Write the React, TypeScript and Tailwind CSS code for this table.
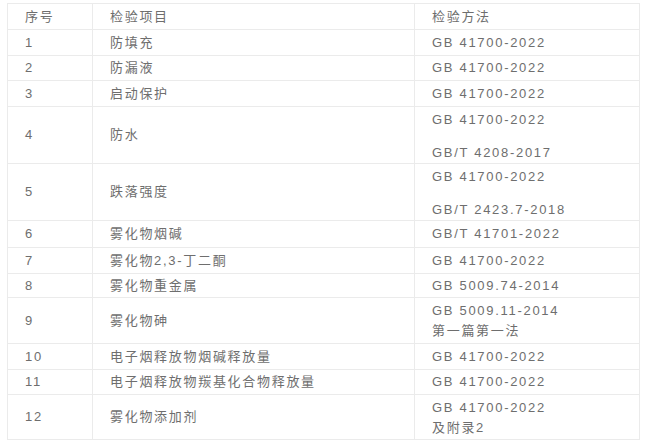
import React from "react";

type Row = {
  no: string;
  item: string;
  methods: string[];
  gap?: boolean;
  h: string;
};

const rows: Row[] = [
  { no: "1", item: "防填充", methods: ["GB 41700-2022"], h: "h-[26px]" },
  { no: "2", item: "防漏液", methods: ["GB 41700-2022"], h: "h-[25px]" },
  { no: "3", item: "启动保护", methods: ["GB 41700-2022"], h: "h-[26px]" },
  { no: "4", item: "防水", methods: ["GB 41700-2022", "GB/T 4208-2017"], gap: true, h: "h-[57px]" },
  { no: "5", item: "跌落强度", methods: ["GB 41700-2022", "GB/T 2423.7-2018"], gap: true, h: "h-[56px]" },
  { no: "6", item: "雾化物烟碱", methods: ["GB/T 41701-2022"], h: "h-[27px]" },
  { no: "7", item: "雾化物2,3-丁二酮", methods: ["GB 41700-2022"], h: "h-[26px]" },
  { no: "8", item: "雾化物重金属", methods: ["GB 5009.74-2014"], h: "h-[24px]" },
  { no: "9", item: "雾化物砷", methods: ["GB 5009.11-2014", "第一篇第一法"], h: "h-[46px]" },
  { no: "10", item: "电子烟释放物烟碱释放量", methods: ["GB 41700-2022"], h: "h-[26px]" },
  { no: "11", item: "电子烟释放物羰基化合物释放量", methods: ["GB 41700-2022"], h: "h-[25px]" },
  { no: "12", item: "雾化物添加剂", methods: ["GB 41700-2022", "及附录2"], h: "h-[45px]" },
];

const cell = "border border-[#ebebeb] pl-[17px] pr-2 align-middle";

export default function App() {
  return (
    <div
      className="w-[645px] h-[445px] bg-white pl-[7px] pt-[3px] text-[13px] tracking-[1.7px] text-[#6e6e6e]"
      style={{ fontFamily: '"Liberation Sans", "Noto Sans CJK SC", sans-serif' }}
    >
      <table className="w-[632px] border-collapse table-fixed">
        <colgroup>
          <col className="w-[85px]" />
          <col className="w-[322px]" />
          <col className="w-[225px]" />
        </colgroup>
        <tbody>
          <tr className="h-[26px]">
            <td className={cell}>序号</td>
            <td className={cell}>检验项目</td>
            <td className={cell}>检验方法</td>
          </tr>
          {rows.map((r) => {
            const multi = r.methods.length > 1;
            return (
              <tr key={r.no} className={r.h}>
                <td className={cell}>{r.no}</td>
                <td className={cell}>{r.item}</td>
                <td className={`border border-[#ebebeb] pl-[17px] pr-2 ${multi ? "align-top pt-[3px]" : "align-middle"}`}>
                  {r.methods.map((m, i) => (
                    <div
                      key={m}
                      className={`leading-[20px] ${i > 0 && r.gap ? "mt-[13px]" : ""}`}
                    >
                      {m}
                    </div>
                  ))}
                </td>
              </tr>
            );
          })}
        </tbody>
      </table>
    </div>
  );
}
